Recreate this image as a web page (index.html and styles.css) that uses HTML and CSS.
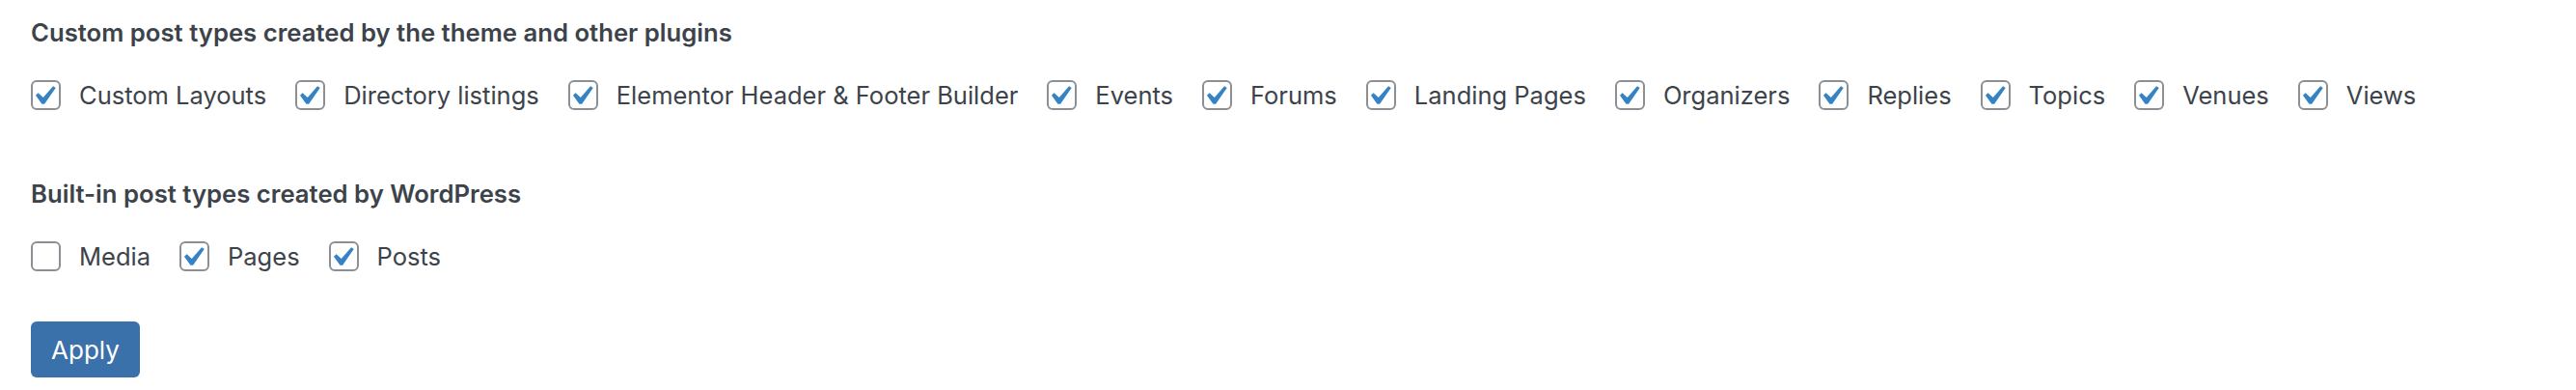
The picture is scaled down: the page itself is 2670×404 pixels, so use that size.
FILE: index.html
```html
<!DOCTYPE html>
<html lang="en">
<head>
    <meta charset="UTF-8">
    <meta name="viewport" content="width=device-width, initial-scale=1.0">
    <title>Post types</title>
    <link rel="stylesheet" href="styles.css">
</head>
<body>
    <div class="panel">

        <!-- Tipos creados por el tema y los plugins -->
        <h3 class="group-title">Custom post types created by the theme and other plugins</h3>
        <div class="options">
            <label class="option"><span class="box checked"><svg viewBox="4.3 2.8 13.5 13.5"><path d="M14.83 4.89l1.34.94-5.81 8.38H9.02L5.78 9.67l1.34-1.25 2.57 2.4z"/></svg></span>Custom Layouts</label>
            <label class="option"><span class="box checked"><svg viewBox="4.3 2.8 13.5 13.5"><path d="M14.83 4.89l1.34.94-5.81 8.38H9.02L5.78 9.67l1.34-1.25 2.57 2.4z"/></svg></span>Directory listings</label>
            <label class="option"><span class="box checked"><svg viewBox="4.3 2.8 13.5 13.5"><path d="M14.83 4.89l1.34.94-5.81 8.38H9.02L5.78 9.67l1.34-1.25 2.57 2.4z"/></svg></span>Elementor Header &amp; Footer Builder</label>
            <label class="option"><span class="box checked"><svg viewBox="4.3 2.8 13.5 13.5"><path d="M14.83 4.89l1.34.94-5.81 8.38H9.02L5.78 9.67l1.34-1.25 2.57 2.4z"/></svg></span>Events</label>
            <label class="option"><span class="box checked"><svg viewBox="4.3 2.8 13.5 13.5"><path d="M14.83 4.89l1.34.94-5.81 8.38H9.02L5.78 9.67l1.34-1.25 2.57 2.4z"/></svg></span>Forums</label>
            <label class="option"><span class="box checked"><svg viewBox="4.3 2.8 13.5 13.5"><path d="M14.83 4.89l1.34.94-5.81 8.38H9.02L5.78 9.67l1.34-1.25 2.57 2.4z"/></svg></span>Landing Pages</label>
            <label class="option"><span class="box checked"><svg viewBox="4.3 2.8 13.5 13.5"><path d="M14.83 4.89l1.34.94-5.81 8.38H9.02L5.78 9.67l1.34-1.25 2.57 2.4z"/></svg></span>Organizers</label>
            <label class="option"><span class="box checked"><svg viewBox="4.3 2.8 13.5 13.5"><path d="M14.83 4.89l1.34.94-5.81 8.38H9.02L5.78 9.67l1.34-1.25 2.57 2.4z"/></svg></span>Replies</label>
            <label class="option"><span class="box checked"><svg viewBox="4.3 2.8 13.5 13.5"><path d="M14.83 4.89l1.34.94-5.81 8.38H9.02L5.78 9.67l1.34-1.25 2.57 2.4z"/></svg></span>Topics</label>
            <label class="option"><span class="box checked"><svg viewBox="4.3 2.8 13.5 13.5"><path d="M14.83 4.89l1.34.94-5.81 8.38H9.02L5.78 9.67l1.34-1.25 2.57 2.4z"/></svg></span>Venues</label>
            <label class="option"><span class="box checked"><svg viewBox="4.3 2.8 13.5 13.5"><path d="M14.83 4.89l1.34.94-5.81 8.38H9.02L5.78 9.67l1.34-1.25 2.57 2.4z"/></svg></span>Views</label>
        </div>

        <!-- Tipos nativos de WordPress -->
        <h3 class="group-title second">Built-in post types created by WordPress</h3>
        <div class="options">
            <label class="option"><span class="box"></span>Media</label>
            <label class="option"><span class="box checked"><svg viewBox="4.3 2.8 13.5 13.5"><path d="M14.83 4.89l1.34.94-5.81 8.38H9.02L5.78 9.67l1.34-1.25 2.57 2.4z"/></svg></span>Pages</label>
            <label class="option"><span class="box checked"><svg viewBox="4.3 2.8 13.5 13.5"><path d="M14.83 4.89l1.34.94-5.81 8.38H9.02L5.78 9.67l1.34-1.25 2.57 2.4z"/></svg></span>Posts</label>
        </div>

        <button class="apply-button">Apply</button>
    </div>
</body>
</html>
```

FILE: styles.css
```css
body {
    margin: 0;
    background: #ffffff;
    font-family: Inter, "Noto Sans", sans-serif;
    color: #3c434a; /* Gris de texto de WordPress */
}

.panel {
    padding: 17px 0 0 32px;
}

.group-title {
    margin: 0;
    font-size: 25.7px;
    line-height: 34px;
    font-weight: 600;
    color: #3c434a;
}

.group-title.second {
    margin-top: 69px;
}

.options {
    display: flex;
    flex-wrap: wrap;
    column-gap: 30px;
    margin-top: 30px;
}

.option {
    display: flex;
    align-items: center;
    gap: 19px;
    height: 34px;
    font-size: 25.5px;
    cursor: pointer;
}

/* Casilla dibujada a mano */
.box {
    display: flex;
    justify-content: center;
    align-items: center;
    box-sizing: border-box;
    width: 31px;
    height: 31px;
    border: 2px solid #8c8f94;
    border-radius: 6px;
    background: #fff;
}

.box svg {
    width: 27px;
    height: 27px;
    fill: #3582c4;
}

.apply-button {
    display: block;
    margin-top: 51px;
    width: 113px;
    height: 58px;
    padding: 0;
    border: none;
    border-radius: 6px;
    background: #3a71ab;
    color: #fff;
    font-family: Inter, "Noto Sans", sans-serif;
    font-size: 26px;
    cursor: pointer;
}
```
